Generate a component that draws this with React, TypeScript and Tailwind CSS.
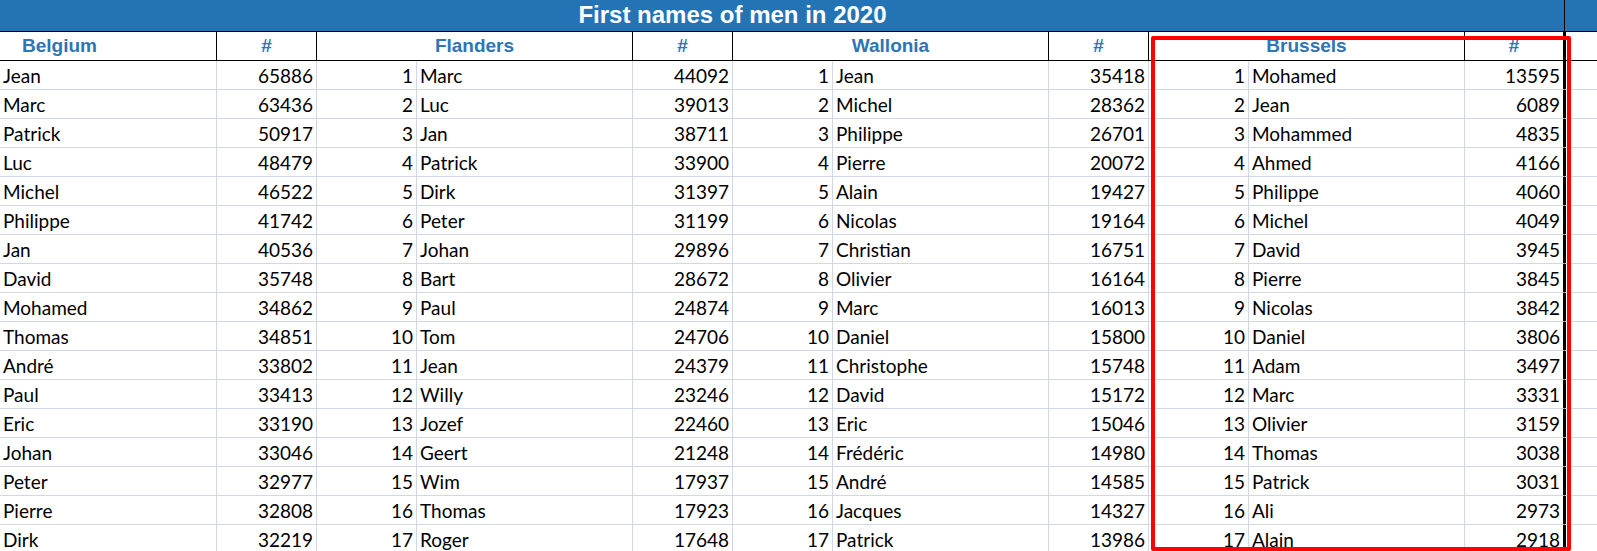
import React from "react";

const belgium: [string, number][] = [
  ["Jean", 65886], ["Marc", 63436], ["Patrick", 50917], ["Luc", 48479], ["Michel", 46522],
  ["Philippe", 41742], ["Jan", 40536], ["David", 35748], ["Mohamed", 34862], ["Thomas", 34851],
  ["André", 33802], ["Paul", 33413], ["Eric", 33190], ["Johan", 33046], ["Peter", 32977],
  ["Pierre", 32808], ["Dirk", 32219],
];
const flanders: [string, number][] = [
  ["Marc", 44092], ["Luc", 39013], ["Jan", 38711], ["Patrick", 33900], ["Dirk", 31397],
  ["Peter", 31199], ["Johan", 29896], ["Bart", 28672], ["Paul", 24874], ["Tom", 24706],
  ["Jean", 24379], ["Willy", 23246], ["Jozef", 22460], ["Geert", 21248], ["Wim", 17937],
  ["Thomas", 17923], ["Roger", 17648],
];
const wallonia: [string, number][] = [
  ["Jean", 35418], ["Michel", 28362], ["Philippe", 26701], ["Pierre", 20072], ["Alain", 19427],
  ["Nicolas", 19164], ["Christian", 16751], ["Olivier", 16164], ["Marc", 16013], ["Daniel", 15800],
  ["Christophe", 15748], ["David", 15172], ["Eric", 15046], ["Frédéric", 14980], ["André", 14585],
  ["Jacques", 14327], ["Patrick", 13986],
];
const brussels: [string, number][] = [
  ["Mohamed", 13595], ["Jean", 6089], ["Mohammed", 4835], ["Ahmed", 4166], ["Philippe", 4060],
  ["Michel", 4049], ["David", 3945], ["Pierre", 3845], ["Nicolas", 3842], ["Daniel", 3806],
  ["Adam", 3497], ["Marc", 3331], ["Olivier", 3159], ["Thomas", 3038], ["Patrick", 3031],
  ["Ali", 2973], ["Alain", 2918],
];

const dataCell =
  "h-[29px] border-r border-b border-[#D0D7E5] text-[19px] leading-[24px] pt-[3px] text-black whitespace-nowrap overflow-hidden";
const left = dataCell + " pl-[3px] text-left";
const right = dataCell + " pr-[3px] text-right";
const headCell =
  "h-[29px] border-r border-b border-black text-[19px] leading-[28px] font-bold text-[#2E75B6] text-center whitespace-nowrap";
const arial = { fontFamily: "'Liberation Sans', Arial, sans-serif" };

export default function App() {
  return (
    <div
      className="relative w-[1597px] h-[551px] overflow-hidden bg-white"
      style={{ fontFamily: "Lato, 'Open Sans', sans-serif" }}
    >
      <div className="grid grid-cols-[217px_100px_100px_216px_100px_100px_216px_100px_100px_216px_100px_1fr]">
        {/* title row */}
        <div
          className="col-span-10 h-[32px] bg-[#2473B5] border-b border-black text-white text-[24px] font-bold leading-[29px] text-center"
          style={arial}
        >
          First names of men in 2020
        </div>
        <div className="h-[32px] bg-[#2473B5] border-b border-r border-black" />
        <div className="h-[32px] bg-[#2473B5] border-b border-black" />

        {/* header row */}
        <div style={arial} className={headCell + " !text-left pl-[22px]"}>Belgium</div>
        <div style={arial} className={headCell}>#</div>
        <div style={arial} className={headCell + " col-span-2"}>Flanders</div>
        <div style={arial} className={headCell}>#</div>
        <div style={arial} className={headCell + " col-span-2"}>Wallonia</div>
        <div style={arial} className={headCell}>#</div>
        <div style={arial} className={headCell + " col-span-2"}>Brussels</div>
        <div style={arial} className={headCell + " !border-r-[3px] -mr-[1px]"}>#</div>
        <div className="h-[29px] border-b border-black" />

        {belgium.map((b, i) => (
          <React.Fragment key={i}>
            <div className={left}>{b[0]}</div>
            <div className={right}>{b[1]}</div>
            <div className={right}>{i + 1}</div>
            <div className={left}>{flanders[i][0]}</div>
            <div className={right}>{flanders[i][1]}</div>
            <div className={right}>{i + 1}</div>
            <div className={left}>{wallonia[i][0]}</div>
            <div className={right}>{wallonia[i][1]}</div>
            <div className={right}>{i + 1}</div>
            <div className={left}>{brussels[i][0]}</div>
            <div className={right + " !border-r-[3px] !border-r-black -mr-[1px] pr-[2px]"}>{brussels[i][1]}</div>
            <div className="h-[29px] border-b border-[#D0D7E5]" />
          </React.Fragment>
        ))}
      </div>

      {/* red highlight box */}
      <div className="absolute left-[1151px] top-[36px] w-[420px] h-[515px] border-[4px] border-[#FF0000] rounded-[2px] pointer-events-none" />
    </div>
  );
}
